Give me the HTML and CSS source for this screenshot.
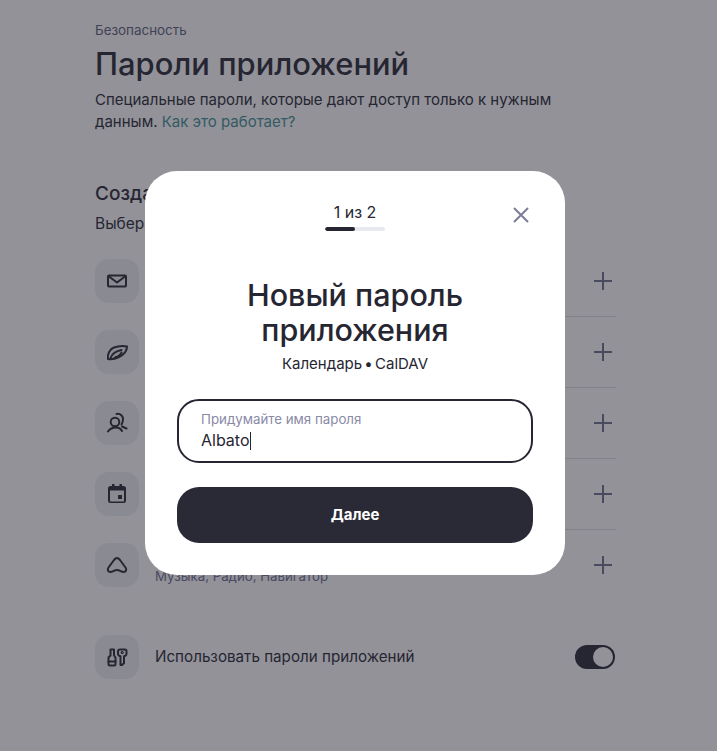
FILE: index.html
```html
<!DOCTYPE html>
<html lang="ru">
<head>
<meta charset="utf-8">
<title>Пароли приложений</title>
<link rel="stylesheet" href="styles.css">
</head>
<body>
<main class="page">
  <div class="crumb">Безопасность</div>
  <h1 class="title">Пароли приложений</h1>
  <p class="lead">Специальные пароли, которые дают доступ только к нужным данным. <a class="link" href="#">Как это работает?</a></p>
  <h2 class="subtitle">Создать пароль приложения</h2>
  <p class="hint">Выберите приложение</p>
  <ul class="rows">
    <li class="row">
      <span class="tile"><svg class="icon" viewBox="0 0 24 24"><rect x="3" y="6.500" width="18" height="11" rx="1"/><path d="M4 7.500l8 6 8-6"/></svg></span>
      <span class="row-text"><span class="row-title">Почта</span><span class="row-sub">Mail</span></span>
      <svg class="plus" viewBox="0 0 20 20"><path d="M10 1v18M1 10h18"/></svg>
    </li>
    <li class="row">
      <span class="tile"><svg class="icon" viewBox="0 0 24 24"><path d="M3 19C2 14 5 9 9 7.500 13 6 18 5.500 22 6.500 22 11 18 15 14 17 10 19 6 19.500 3 19z"/><path d="M5.500 18C7 14 11 11 16.500 10M10 17.500c3-1 5.500-2.500 6.500-5"/></svg></span>
      <span class="row-text"><span class="row-title">Диск</span><span class="row-sub">WebDAV</span></span>
      <svg class="plus" viewBox="0 0 20 20"><path d="M10 1v18M1 10h18"/></svg>
    </li>
    <li class="row">
      <span class="tile"><svg class="icon" viewBox="0 0 24 24"><circle cx="10" cy="11" r="4.300"/><path d="M11.500 3c4-.8 6.800 2 6.500 5.500-.1 2-.6 3.500-1.500 5"/><path d="M3 20.500C5 17.500 8 16.500 11 16.500s5 1.500 6 3.500M17 15.500l4.500 2"/></svg></span>
      <span class="row-text"><span class="row-title">Контакты</span><span class="row-sub">CardDAV</span></span>
      <svg class="plus" viewBox="0 0 20 20"><path d="M10 1v18M1 10h18"/></svg>
    </li>
    <li class="row">
      <span class="tile"><svg class="icon icon-solid" viewBox="0 0 24 24"><path class="fill" fill-rule="evenodd" d="M7 2h2.500v2h5V2H17v2h1.500A2.500 2.500 0 0 1 21 6.500v12a2.500 2.500 0 0 1-2.500 2.500h-13A2.500 2.500 0 0 1 3 18.500v-12A2.500 2.500 0 0 1 5.500 4H7zM5 8.500v10c0 .6.400 1 1 1h12c.6 0 1-.4 1-1v-10zM13 13h4v4h-4z"/></svg></span>
      <span class="row-text"><span class="row-title">Календарь</span><span class="row-sub">CalDAV</span></span>
      <svg class="plus" viewBox="0 0 20 20"><path d="M10 1v18M1 10h18"/></svg>
    </li>
    <li class="row row-last">
      <span class="tile"><svg class="icon" viewBox="0 0 24 24"><path d="M12 5c-1.200 0-2 .8-3 2L3.500 14.500c-1.500 2-.5 4.500 2 4.500 2 0 4-2 6.500-2s4.500 2 6.500 2c2.500 0 3.500-2.500 2-4.500L15 7c-1-1.200-1.800-2-3-2z"/></svg></span>
      <span class="row-text"><span class="row-title">Яндекс ID</span><span class="row-sub">Музыка, Радио, Навигатор</span></span>
      <svg class="plus" viewBox="0 0 20 20"><path d="M10 1v18M1 10h18"/></svg>
    </li>
  </ul>
  <div class="setting">
    <span class="tile"><svg class="icon" viewBox="0 0 24 24"><path d="M5.500 4.500h3.500v6l1.500 2V19a1.500 1.500 0 0 1-1.500 1.500H5A1.500 1.500 0 0 1 3.500 19v-6.500l2-2z"/><path d="M3.500 16.500h7"/><path d="M15 4.500h5c1 0 1.500.5 1.500 1.500v2.500c0 1.500-1 2.500-2.500 2.700V18l-2 2h-1.500v-8.800C14 11 13 10 13 8.500V6.500c0-1.200.8-2 2-2z"/><circle cx="17.200" cy="7.500" r=".6"/></svg></span>
    <span class="setting-label">Использовать пароли приложений</span>
    <span class="toggle"><span class="knob"></span></span>
  </div>
</main>

<div class="overlay">
  <section class="modal">
    <header class="steps">
      <div class="steps-count">1 из 2</div>
      <div class="bar"><div class="bar-fill"></div></div>
      <svg class="close" viewBox="0 0 16 16"><path d="M1 1l14 14M15 1L1 15"/></svg>
    </header>
    <h2 class="modal-title">Новый пароль приложения</h2>
    <p class="modal-sub">Календарь • CalDAV</p>
    <div class="field">
      <div class="field-label">Придумайте имя пароля</div>
      <div class="field-value">Albato<span class="caret"></span></div>
    </div>
    <button class="submit" type="button">Далее</button>
  </section>
</div>
</body>
</html>
```
FILE: styles.css
```css
* { box-sizing: border-box; }
html, body { margin: 0; height: 100%; overflow: hidden; }
body {
  background: #fff;
  color: #262632;
  font-family: Inter, "Noto Sans", sans-serif;
}
.page { width: 521px; margin-left: 95px; padding-top: 21px; }
.crumb { font-size: 13.400px; line-height: 18px; color: #5c5c78; }
.title { margin: 7px 0 0; font-size: 30.900px; line-height: 36px; font-weight: 500; }
.lead { margin: 7px 0 0; width: 480px; font-size: 15px; line-height: 22px; }
.link { color: #3f8f93; text-decoration: none; }
.subtitle { margin: 48px 0 0; font-size: 19px; line-height: 26px; font-weight: 500; }
.hint { margin: 7px 0 0; font-size: 15.500px; line-height: 20px; }
.rows { list-style: none; margin: 11px 0 0; padding: 0; }
.row { display: flex; align-items: center; height: 71px; position: relative; }
.row::after { content: ""; position: absolute; left: 60px; right: 0; bottom: -1px; height: 1px; background: #dcdce4; }
.row-last::after { display: none; }
.tile {
  flex: none; display: flex; align-items: center; justify-content: center;
  width: 44px; height: 44px; border-radius: 14px; background: #eeeef3;
}
.icon { width: 24px; height: 24px; fill: none; stroke: #262632; stroke-width: 2; stroke-linejoin: round; stroke-linecap: round; }
.icon-solid { stroke: none; }
.fill { fill: #262632; }
.row-text { flex: 1; display: flex; flex-direction: column; margin-left: 16px; padding-top: 2px; }
.row-title { font-size: 15px; line-height: 20px; }
.row-sub { font-size: 13.250px; line-height: 20px; color: #6e6e92; }
.plus { flex: none; width: 20px; height: 20px; margin-right: 3px; fill: none; stroke: #6c6c8c; stroke-width: 2; }
.setting { display: flex; align-items: center; margin-top: 35px; }
.setting-label { flex: 1; margin-left: 16px; padding-bottom: 2px; font-size: 15.200px; }
.toggle { display: flex; justify-content: flex-end; align-items: center; flex: none; width: 40px; height: 24px; margin-right: 1px; padding-right: 2px; border-radius: 12px; background: #262632; }
.knob { width: 20px; height: 20px; border-radius: 50%; background: #fff; }
.overlay {
  position: absolute; inset: 0;
  display: flex; align-items: flex-start;
  padding: 171px 0 0 145px;
  background: rgba(38, 38, 50, .5);
}
.modal {
  width: 420px; height: 404px; padding: 32px; border-radius: 32px;
  background: #fff; text-align: center;
}
.steps { position: relative; height: 68px; }
.steps-count { font-size: 16px; line-height: 20px; color: #262632; margin-top: -1px; }
.bar { width: 60px; height: 4px; margin: 5px auto 0; border-radius: 2px; background: #e8e8f0; overflow: hidden; }
.bar-fill { width: 30px; height: 4px; border-radius: 2px; background: #262632; }
.close { position: absolute; right: 4px; top: 5px; width: 16px; height: 16px; fill: none; stroke: #7c7c98; stroke-width: 2; }
.modal-title { margin: 7px auto 0; width: 300px; font-size: 30.500px; line-height: 35px; font-weight: 500; color: #262632; }
.modal-sub { margin: 7px 0 0; font-size: 15px; line-height: 20px; word-spacing: -2px; }
.field {
  height: 64px; margin-top: 25px; padding: 9px 22px; border: 2px solid #262632; border-radius: 22px;
  text-align: left;
}
.field-label { font-size: 13.300px; line-height: 19px; color: #8a8aa6; }
.field-value { font-size: 16px; line-height: 22px; }
.caret { display: inline-block; width: 1px; height: 18px; background: #262632; vertical-align: -4px; }
.submit {
  display: block; width: 100%; height: 56px; margin-top: 24px; padding: 0 0 2px; border: 0; border-radius: 22px;
  background: #2a2a36; color: #fff; font: 700 15px Inter, "Noto Sans", sans-serif;
}
```
